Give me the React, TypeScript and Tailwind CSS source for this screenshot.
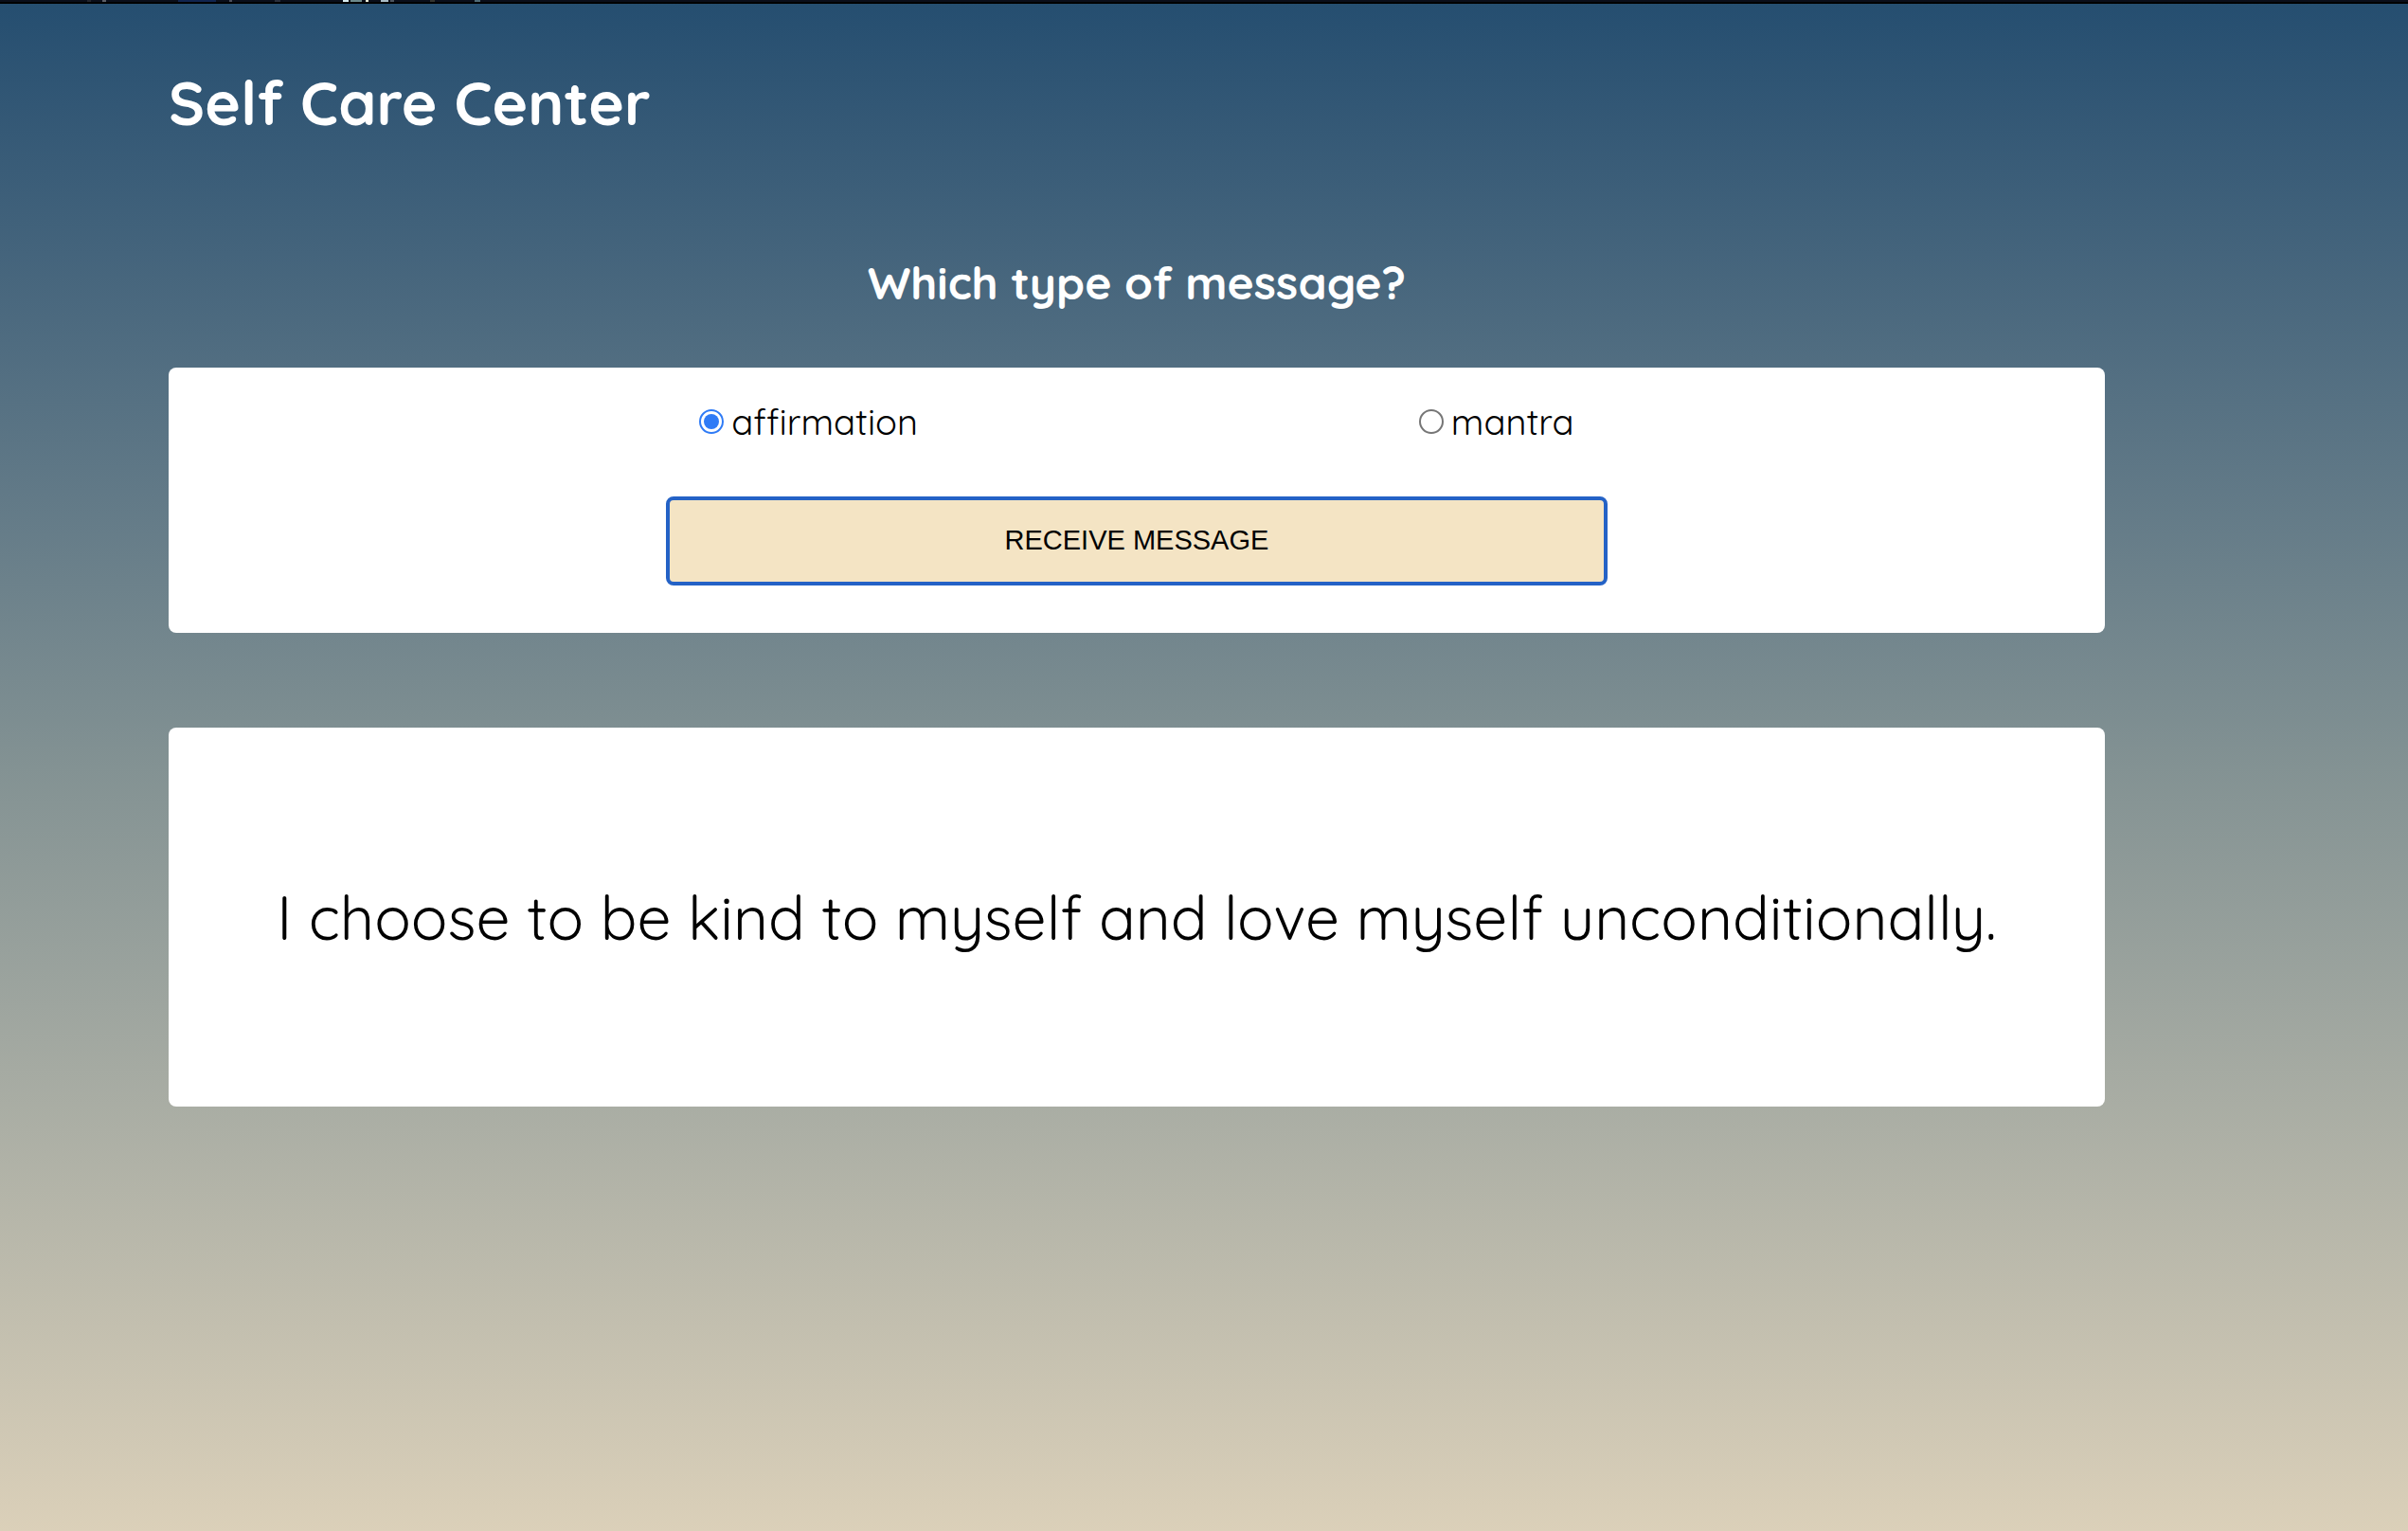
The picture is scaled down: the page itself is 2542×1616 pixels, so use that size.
import React, { useState } from "react";

const specks = [
  { x: 92, w: 4, c: "#23252e" },
  { x: 108, w: 4, c: "#5a5d66" },
  { x: 188, w: 40, c: "#10244f" },
  { x: 242, w: 3, c: "#4a4d5a" },
  { x: 290, w: 6, c: "#2a2f3c" },
  { x: 362, w: 6, c: "#d8ecf0" },
  { x: 370, w: 12, c: "#6d8a8c" },
  { x: 386, w: 3, c: "#e6ead8" },
  { x: 402, w: 8, c: "#a9bcc6" },
  { x: 412, w: 4, c: "#4c545e" },
  { x: 454, w: 5, c: "#33332f" },
  { x: 501, w: 6, c: "#4f6a76" },
];

export default function App() {
  const [kind, setKind] = useState("affirmation");
  const options = ["affirmation", "mantra"];
  return (
    <div className="flex min-h-screen flex-col">
      <svg aria-hidden="true" className="block h-1 w-full shrink-0 bg-black">
        <rect width="100%" height="2" fill="#0a0e1a" />
        {specks.map((s) => (
          <rect key={s.x} x={s.x} y="0" width={s.w} height="2" fill={s.c} />
        ))}
      </svg>
      <div className="grow bg-linear-to-b from-[#254e70] via-[#839293] to-[#dbd0b9] px-[7%] pt-[68px] font-['Quicksand','Lato',sans-serif]">
        <main className="w-[2044px] max-w-full">
          <h1 className="text-[64px] leading-[72px] font-bold text-white">Self Care Center</h1>
          <h2 className="mt-[124px] text-center text-[48px] leading-[60px] font-bold text-white">Which type of message?</h2>
          <form onSubmit={(e) => e.preventDefault()} className="mt-[60px] rounded-lg bg-white pt-8 pb-[50px]">
            <div className="flex justify-around px-[296px]">
              {options.map((o) => (
                <label key={o} className="flex items-center gap-2 text-[38px] leading-[50px] text-black">
                  <input
                    type="radio"
                    name="kind"
                    checked={kind === o}
                    onChange={() => setKind(o)}
                    className="size-[26px] appearance-none rounded-full border-2 border-[#767676] bg-white bg-clip-content p-[3px] checked:border-[#2f7bf6] checked:bg-[#2f7bf6]"
                  />
                  {o}
                </label>
              ))}
            </div>
            <button className="mx-auto mt-[54px] block h-[94px] w-[994px] max-w-full rounded-lg border-4 border-[#2462c6] bg-[#f4e4c4] font-['Liberation_Sans',sans-serif] text-[29px] text-black">
              RECEIVE MESSAGE
            </button>
          </form>
          <section className="mt-[100px] flex min-h-[400px] items-center justify-center rounded-lg bg-white">
            <p className="text-center text-[64px] leading-[80px] text-black">I choose to be kind to myself and love myself unconditionally.</p>
          </section>
        </main>
      </div>
    </div>
  );
}
